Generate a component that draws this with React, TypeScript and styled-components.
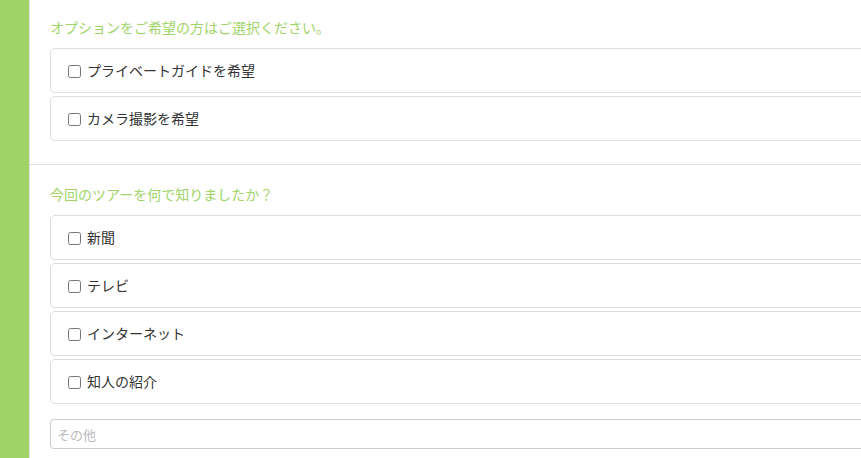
import React from "react";
import styled, { createGlobalStyle } from "styled-components";

const Global = createGlobalStyle`
  html, body { margin: 0; padding: 0; background: #fff; overflow: hidden; }
  body { font-family: "Noto Sans CJK JP", "Noto Sans", sans-serif; color: #333; }
  * { box-sizing: border-box; }
`;

const Page = styled.div`
  display: flex;
  min-height: 458px;
  width: 900px;
`;

const Sidebar = styled.div`
  width: 30px;
  flex: none;
  background: #a0d468;
  border-right: 1px solid #e2e2e2;
`;

const Main = styled.div`
  flex: 1;
`;

const Section = styled.section<{ $top: number; $bottom: number; $divider?: boolean }>`
  padding: ${(p) => p.$top}px 0 ${(p) => p.$bottom}px 20px;
  border-bottom: ${(p) => (p.$divider ? "1px solid #ddd" : "none")};
`;

const Heading = styled.div`
  font-size: 14px;
  line-height: 20px;
  color: #a0d468;
  margin-bottom: 11px;
`;

const List = styled.div`
  display: flex;
  flex-direction: column;
  gap: 3px;
`;

const Card = styled.label`
  display: flex;
  align-items: center;
  gap: 6px;
  height: 45px;
  padding-left: 17px;
  padding-bottom: 2px;
  border: 1px solid #ddd;
  border-radius: 5px;
  font-size: 14px;
  color: #333;
`;

const Box = styled.input`
  margin: 3px 0 0 0;
  width: 13px;
  height: 13px;
`;

const Other = styled.input`
  margin-top: 15px;
  display: block;
  width: 100%;
  height: 30px;
  border: 1px solid #ccc;
  border-radius: 4px;
  padding: 0 6px;
  font-family: "Noto Sans CJK JP", sans-serif;
  font-size: 13px;
  color: #333;
  &::placeholder { color: #bbb; }
`;

const options = ["プライベートガイドを希望", "カメラ撮影を希望"];
const sources = ["新聞", "テレビ", "インターネット", "知人の紹介"];

export default function App() {
  return (
    <>
      <Global />
      <Page>
        <Sidebar />
        <Main>
          <Section $top={17} $bottom={23} $divider>
            <Heading>オプションをご希望の方はご選択ください。</Heading>
            <List>
              {options.map((o) => (
                <Card key={o}>
                  <Box type="checkbox" />
                  {o}
                </Card>
              ))}
            </List>
          </Section>
          <Section $top={19} $bottom={0}>
            <Heading>今回のツアーを何で知りましたか？</Heading>
            <List>
              {sources.map((o) => (
                <Card key={o}>
                  <Box type="checkbox" />
                  {o}
                </Card>
              ))}
            </List>
            <Other placeholder="その他" />
          </Section>
        </Main>
      </Page>
    </>
  );
}
